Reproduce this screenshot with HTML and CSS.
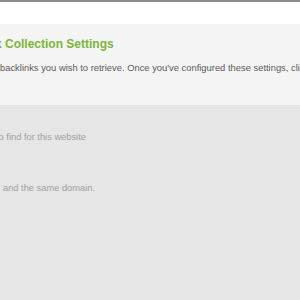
FILE: index.html
```html
<!DOCTYPE html>
<html>
<head>
<meta charset="utf-8">
<link rel="stylesheet" href="styles.css">
</head>
<body>
<div class="topbar"></div>
<div class="whitespace"></div>
<section class="panel">
  <h2 class="title">k Collection Settings</h2>
  <p class="desc">backlinks you wish to retrieve. Once you've configured these settings, click the button below to begin.</p>
</section>
<section class="fields">
  <p class="hint hint-first">to find for this website</p>
  <p class="hint hint-second">and the same domain.</p>
</section>
</body>
</html>
```

FILE: styles.css
```css
html, body {
  margin: 0;
  padding: 0;
  height: 100%;
  overflow: hidden;
}
body {
  background: #e6e6e6;
  font-family: "Liberation Sans", Arial, sans-serif;
}
.topbar {
  height: 2px;
  background: #8c8c8c;
}
.whitespace {
  height: 22px;
  background: #ffffff;
}
.panel {
  background: #f4f4f4;
  padding: 12px 0 31px 0;
  border-bottom: 1px solid #e2e2e2;
  overflow: hidden;
}
.title {
  margin: 0;
  font-size: 12px;
  line-height: 16px;
  font-weight: bold;
  color: #7db53b;
  text-indent: -5px;
  white-space: nowrap;
}
.desc {
  margin: 10px 0 0 0;
  font-size: 9.4px;
  line-height: 12px;
  color: #5a5a5a;
  white-space: nowrap;
}
.fields {
  overflow: hidden;
}
.hint {
  margin: 0;
  font-size: 9.3px;
  line-height: 12px;
  color: #a0a0a0;
  white-space: nowrap;
}
.hint-first {
  margin-top: 25px;
  text-indent: -4px;
}
.hint-second {
  margin-top: 39px;
  text-indent: 3px;
}
```
